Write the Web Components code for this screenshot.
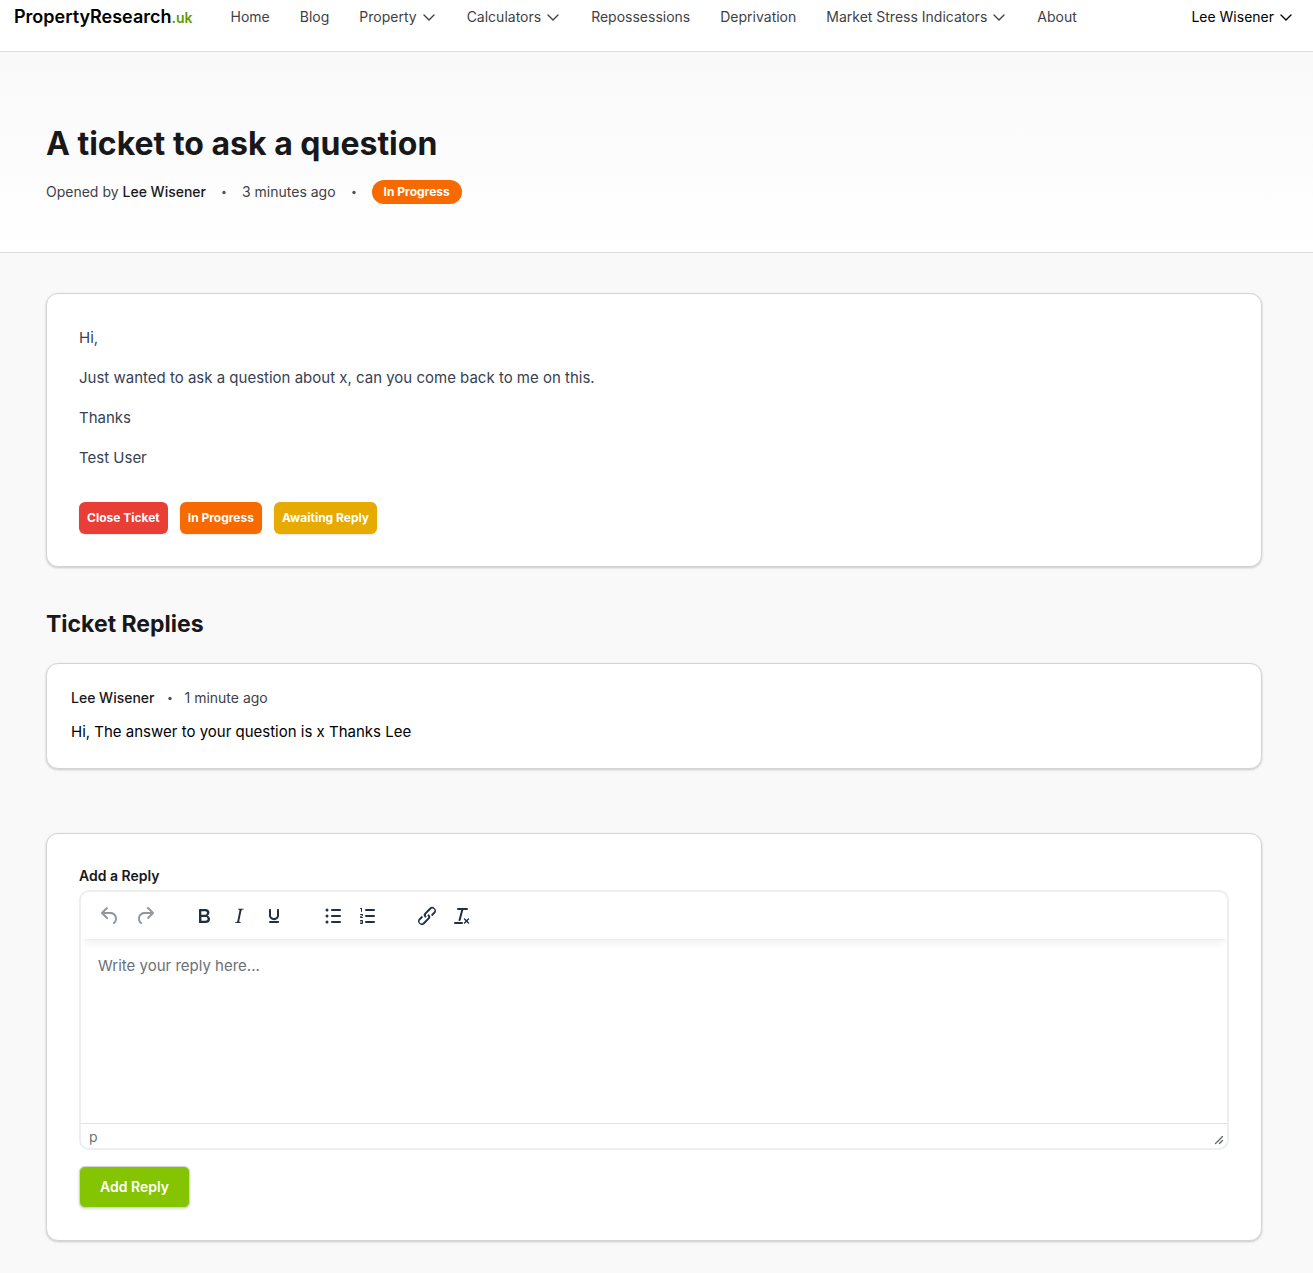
<!DOCTYPE html>
<html lang="en">
<head>
<meta charset="utf-8">
<meta name="viewport" content="width=device-width, initial-scale=1">
<title>A ticket to ask a question</title>
<style>
  body {
    margin: 0;
    background: #f9f9f9;
    color: #000;
    font-family: Inter, "Liberation Sans", sans-serif;
    font-size: 15px;
    line-height: 24px;
    --ink: #18181b;
    --muted: #3f3f46;
    --line: #d4d4d8;
  }
  main {
    padding: 40px 0 32px;
  }
  h2 {
    margin: 40px 0 22px;
    color: var(--ink);
    font-size: 23px;
    line-height: 34px;
    font-weight: 700;
  }
  b {
    color: var(--ink);
    font-weight: 500;
  }
  form {
    display: grid;
    gap: 16px;
    justify-items: start;
  }
  rich-editor {
    width: 100%;
  }
  .message p {
    margin: 0 0 16px;
    color: #374151;
  }
  .message p:last-of-type {
    margin-bottom: 0;
  }
  .actions {
    display: flex;
    flex-wrap: wrap;
    gap: 12px;
    margin-top: 32px;
  }
  .reply p {
    margin: 12px 0 0;
  }
  .add-reply {
    display: block;
    margin-top: 64px;
  }
</style>
</head>
<body>

<site-header user="Lee Wisener">
  <nav-item href="#home">Home</nav-item>
  <nav-item href="#blog">Blog</nav-item>
  <nav-item menu>Property</nav-item>
  <nav-item menu>Calculators</nav-item>
  <nav-item href="#repossessions">Repossessions</nav-item>
  <nav-item href="#deprivation">Deprivation</nav-item>
  <nav-item menu>Market Stress Indicators</nav-item>
  <nav-item href="#about">About</nav-item>
</site-header>

<ticket-hero>
  <span slot="title">A ticket to ask a question</span>
  <meta-line wide>
    <span>Opened by <b>Lee Wisener</b></span>
    <meta-dot></meta-dot>
    <span>3 minutes ago</span>
    <meta-dot></meta-dot>
    <status-badge>In Progress</status-badge>
  </meta-line>
</ticket-hero>

<main>
  <page-container padded>
    <ticket-card class="message">
      <p>Hi,</p>
      <p>Just wanted to ask a question about x, can you come back to me on this.</p>
      <p>Thanks</p>
      <p>Test User</p>
      <div class="actions">
        <action-button tone="red">Close Ticket</action-button>
        <action-button tone="orange">In Progress</action-button>
        <action-button tone="yellow">Awaiting Reply</action-button>
      </div>
    </ticket-card>

    <h2>Ticket Replies</h2>

    <ticket-card compact class="reply">
      <meta-line>
        <b>Lee Wisener</b>
        <meta-dot></meta-dot>
        <span>1 minute ago</span>
      </meta-line>
      <p>Hi, The answer to your question is x Thanks Lee</p>
    </ticket-card>

    <ticket-card class="add-reply">
      <form onsubmit="return false">
        <rich-editor label="Add a Reply" placeholder="Write your reply here..."></rich-editor>
        <action-button tone="lime" large>Add Reply</action-button>
      </form>
    </ticket-card>
  </page-container>
</main>

<script>
const CHEVRON = `
  <svg width="16" height="16" viewBox="0 0 16 16" fill="none" stroke="currentColor"
       stroke-width="1.4" stroke-linecap="round" stroke-linejoin="round" aria-hidden="true">
    <path d="M3 6l5 5 5-5"/>
  </svg>`;

// Centres its content; shared by the header, the hero and the main column
class PageContainer extends HTMLElement {
  constructor() {
    super();
    this.attachShadow({ mode: 'open' });
    this.shadowRoot.innerHTML = `
      <style>
        :host { display: block; padding-right: 5px; }
        div { max-width: 1280px; margin: 0 auto; box-sizing: border-box; }
        :host([padded]) div { padding: 0 32px; }
      </style>
      <div><slot></slot></div>
    `;
  }
}

class NavItem extends HTMLElement {
  constructor() {
    super();
    this.attachShadow({ mode: 'open' });
  }

  connectedCallback() {
    const menu = this.hasAttribute('menu');
    const tag = menu ? 'button' : 'a';
    this.shadowRoot.innerHTML = `
      <style>
        :host { display: block; color: var(--muted); font-size: 14px; line-height: 20px; }
        a, button {
          display: flex;
          align-items: center;
          gap: 4px;
          padding: 0;
          border: 0;
          background: none;
          color: inherit;
          font: inherit;
          white-space: nowrap;
          text-decoration: none;
          cursor: pointer;
        }
      </style>
      <${tag} ${menu ? 'type="button" aria-haspopup="true"' : `href="${this.getAttribute('href')}"`}>
        <slot></slot>${menu ? CHEVRON : ''}
      </${tag}>
    `;
  }
}

class SiteHeader extends HTMLElement {
  constructor() {
    super();
    this.attachShadow({ mode: 'open' });
  }

  connectedCallback() {
    this.shadowRoot.innerHTML = `
      <style>
        :host { display: block; background: #fff; border-bottom: 1px solid #dedee0; }
        .bar { display: flex; align-items: center; padding: 5px 0 22px; }
        .logo {
          display: flex;
          align-items: baseline;
          color: #000;
          font-size: 18px;
          line-height: 24px;
          font-weight: 600;
          text-decoration: none;
        }
        .logo span { color: #5f9c00; font-size: 14px; line-height: 16px; }
        nav { display: flex; gap: 30px; margin-left: 38px; }
        .user { margin-left: auto; color: #000; }
      </style>
      <header>
        <page-container>
          <div class="bar">
            <a class="logo" href="#home">PropertyResearch<span>.uk</span></a>
            <nav><slot></slot></nav>
            <nav-item class="user" menu>${this.getAttribute('user')}</nav-item>
          </div>
        </page-container>
      </header>
    `;
  }
}

class TicketHero extends HTMLElement {
  constructor() {
    super();
    this.attachShadow({ mode: 'open' });
    this.shadowRoot.innerHTML = `
      <style>
        :host {
          display: block;
          padding: 72px 0 48px;
          background: linear-gradient(#f9f9f9, #fff);
          border-bottom: 1px solid #dedee0;
        }
        h1 {
          margin: 0 0 16px;
          color: var(--ink);
          font-size: 32px;
          line-height: 40px;
          font-weight: 700;
        }
      </style>
      <page-container padded>
        <h1><slot name="title"></slot></h1>
        <slot></slot>
      </page-container>
    `;
  }
}

class MetaLine extends HTMLElement {
  constructor() {
    super();
    this.attachShadow({ mode: 'open' });
    this.shadowRoot.innerHTML = `
      <style>
        :host {
          display: flex;
          flex-wrap: wrap;
          align-items: center;
          gap: 12px;
          color: var(--muted);
          font-size: 14px;
          line-height: 20px;
        }
        :host([wide]) { gap: 15px; }
      </style>
      <slot></slot>
    `;
  }
}

class MetaDot extends HTMLElement {
  constructor() {
    super();
    this.attachShadow({ mode: 'open' });
    this.shadowRoot.innerHTML = `
      <style>
        :host { display: block; width: 6px; height: 6px; color: #52525b; }
        svg { display: block; }
      </style>
      <svg width="6" height="6" viewBox="0 0 6 6" aria-hidden="true">
        <circle cx="3" cy="3.5" r="1.7" fill="currentColor"/>
      </svg>
    `;
  }
}

class StatusBadge extends HTMLElement {
  constructor() {
    super();
    this.attachShadow({ mode: 'open' });
    this.shadowRoot.innerHTML = `
      <style>
        :host {
          display: block;
          padding: 4px 12px;
          border-radius: 12px;
          background: #f66a00;
          color: #fff;
          font-size: 12px;
          line-height: 16px;
          font-weight: 700;
        }
      </style>
      <slot></slot>
    `;
  }
}

class TicketCard extends HTMLElement {
  constructor() {
    super();
    this.attachShadow({ mode: 'open' });
    this.shadowRoot.innerHTML = `
      <style>
        :host {
          display: block;
          padding: 32px;
          border: 1px solid var(--line);
          border-radius: 12px;
          background: #fff;
          box-shadow: 0 1px 3px rgba(0, 0, 0, 0.1), 0 1px 2px rgba(0, 0, 0, 0.1);
        }
        :host([compact]) { padding: 24px; }
      </style>
      <slot></slot>
    `;
  }
}

class ActionButton extends HTMLElement {
  constructor() {
    super();
    this.attachShadow({ mode: 'open' });
    this.shadowRoot.innerHTML = `
      <style>
        :host { display: block; }
        :host([tone="red"]) { --tone: #e83e36; }
        :host([tone="orange"]) { --tone: #f66a00; }
        :host([tone="yellow"]) { --tone: #e6aa00; }
        :host([tone="lime"]) { --tone: #84c400; }
        button {
          display: block;
          padding: 8px;
          border: 0;
          border-radius: 6px;
          background: var(--tone);
          color: #fff;
          font: 700 12px/16px Inter, "Liberation Sans", sans-serif;
          box-shadow: 0 1px 2px rgba(0, 0, 0, 0.1);
          cursor: pointer;
        }
        :host([large]) button {
          padding: 10px 20px;
          border: 1px solid var(--line);
          font-size: 14px;
          line-height: 20px;
          font-weight: 600;
          box-shadow: 0 1px 3px rgba(0, 0, 0, 0.15);
        }
      </style>
      <button type="button"><slot></slot></button>
    `;
  }
}

// Toolbar groups, in the order they are shown
const TOOLS = [
  [
    { name: 'Undo', off: true, d: 'M6.4 8H12c3.7 0 6.2 2 6.8 5.1.6 2.7-.4 5.6-2.3 6.8a1 1 0 0 1-1-1.8c1.1-.6 1.8-2.7 1.4-4.6-.5-2.1-2.1-3.5-4.9-3.5H6.4l3.3 3.3a1 1 0 1 1-1.4 1.4l-5-5a1 1 0 0 1 0-1.4l5-5a1 1 0 0 1 1.4 1.4L6.4 8Z' },
    { name: 'Redo', off: true, d: 'M17.6 10H12c-2.8 0-4.4 1.4-4.9 3.5-.4 2 .3 4 1.4 4.6a1 1 0 1 1-1 1.8c-2-1.2-2.9-4.1-2.3-6.8.6-3 3-5.1 6.8-5.1h5.6l-3.3-3.3a1 1 0 1 1 1.4-1.4l5 5a1 1 0 0 1 0 1.4l-5 5a1 1 0 0 1-1.4-1.4l3.3-3.3Z' }
  ],
  [
    { name: 'Bold', d: 'M7.8 19c-.3 0-.5 0-.6-.2l-.2-.5V5.7c0-.2 0-.4.2-.5l.6-.2h5c1.5 0 2.7.3 3.5 1 .7.6 1.1 1.4 1.1 2.5a3 3 0 0 1-.6 1.9c-.4.6-1 1-1.6 1.2.4.1.9.3 1.3.6s.8.7 1 1.2c.4.4.5 1 .5 1.6 0 1.3-.4 2.3-1.3 3-.8.7-2.1 1-3.8 1H7.8Zm5-8.3c.6 0 1.2-.1 1.6-.5.4-.3.6-.7.6-1.3 0-1.1-.8-1.7-2.3-1.7H9.3v3.5h3.4Zm.5 6c.7 0 1.3-.1 1.7-.4.4-.4.6-.9.6-1.5s-.2-1-.7-1.4c-.4-.3-1-.4-2-.4H9.4v3.8h4Z' },
    { name: 'Italic', d: 'm16.7 4.7-.1.9h-.3c-.6 0-1 0-1.4.3-.3.3-.4.6-.5 1.1l-2.1 9.8v.6c0 .5.4.8 1.4.8h.2l-.2.8H8l.2-.8h.2c1.1 0 1.8-.5 2-1.5l2-9.8.1-.5c0-.6-.4-.8-1.4-.8h-.3l.2-.9h5.8Z' },
    { name: 'Underline', d: 'M16 5c.6 0 1 .4 1 1v5.5a4 4 0 0 1-.4 1.8l-1 1.4a5.3 5.3 0 0 1-5.5 1 5 5 0 0 1-1.6-1c-.5-.4-.8-.9-1.1-1.4a4 4 0 0 1-.4-1.8V6c0-.6.4-1 1-1s1 .4 1 1v5.5c0 .3 0 .6.2 1l.6.7a3.3 3.3 0 0 0 2.2.8 3.4 3.4 0 0 0 2.2-.8c.3-.2.4-.5.6-.8l.2-.9V6c0-.6.4-1 1-1ZM8 17h8c.6 0 1 .4 1 1s-.4 1-1 1H8a1 1 0 0 1 0-2Z' }
  ],
  [
    { name: 'Bullet list', d: 'M11 5h8a1 1 0 0 1 0 2h-8a1 1 0 0 1 0-2Zm0 6h8a1 1 0 0 1 0 2h-8a1 1 0 0 1 0-2Zm0 6h8a1 1 0 0 1 0 2h-8a1 1 0 0 1 0-2ZM4.5 6a1.5 1.5 0 1 1 3 0 1.5 1.5 0 0 1-3 0Zm0 6a1.5 1.5 0 1 1 3 0 1.5 1.5 0 0 1-3 0Zm0 6a1.5 1.5 0 1 1 3 0 1.5 1.5 0 0 1-3 0Z' },
    { name: 'Numbered list', d: 'M10 17h8a1 1 0 0 1 0 2h-8a1 1 0 0 1 0-2Zm0-6h8a1 1 0 0 1 0 2h-8a1 1 0 0 1 0-2Zm0-6h8a1 1 0 0 1 0 2h-8a1 1 0 1 1 0-2ZM6 4v3.5c0 .3-.2.5-.5.5a.5.5 0 0 1-.5-.5V5h-.5a.5.5 0 0 1 0-1H6Zm-1 8.8.2.2h1.3c.3 0 .5.2.5.5s-.2.5-.5.5H4.9a1 1 0 0 1-.9-1V13c0-.4.3-.8.6-1l1.2-.4.2-.3a.2.2 0 0 0-.2-.2H4.5a.5.5 0 0 1-.5-.5c0-.3.2-.5.5-.5h1.6c.5 0 .9.4.9 1v.1c0 .4-.3.8-.6 1l-1.2.4-.2.3ZM7 17v2c0 .6-.4 1-1 1H4.5a.5.5 0 0 1 0-1h1.2c.2 0 .3-.1.3-.3 0-.2-.1-.3-.3-.3H4.4a.4.4 0 1 1 0-.8h1.3c.2 0 .3-.1.3-.3 0-.2-.1-.3-.3-.3H4.5a.5.5 0 1 1 0-1H6c.6 0 1 .4 1 1Z' }
  ],
  [
    { name: 'Link', d: 'M6.2 12.3a1 1 0 0 1 1.4 1.4l-2 2a2 2 0 1 0 2.6 2.8l4.8-4.8a1 1 0 0 0 0-1.4 1 1 0 1 1 1.4-1.3 2.9 2.9 0 0 1 0 4L9.6 20a3.9 3.9 0 0 1-5.5-5.5l2-2Zm11.6-.6a1 1 0 0 1-1.4-1.4l2-2a2 2 0 1 0-2.6-2.8L11 10.3a1 1 0 0 0 0 1.4A1 1 0 1 1 9.6 13a2.9 2.9 0 0 1 0-4L14.4 4a3.9 3.9 0 0 1 5.5 5.5l-2 2Z' },
    { name: 'Clear formatting', d: 'M13.2 6a1 1 0 0 1 0 .2l-2.6 10a1 1 0 0 1-1 .8h-.2a.8.8 0 0 1-.8-1l2.6-10H8a1 1 0 1 1 0-2h9a1 1 0 0 1 0 2h-3.8ZM5 18h7a1 1 0 0 1 0 2H5a1 1 0 0 1 0-2Zm13 1.5L16.5 18 15 19.5a.7.7 0 0 1-1-1l1.5-1.5-1.5-1.5a.7.7 0 0 1 1-1l1.5 1.5 1.5-1.5a.7.7 0 0 1 1 1L17.5 17l1.5 1.5a.7.7 0 0 1-1 1Z' }
  ]
];

class RichEditor extends HTMLElement {
  constructor() {
    super();
    this.attachShadow({ mode: 'open' });
  }

  connectedCallback() {
    const groups = TOOLS.map(group => `
      <div class="group">${group.map(tool => `
        <button type="button" aria-label="${tool.name}" ${tool.off ? 'disabled' : ''}>
          <svg width="24" height="24" viewBox="0 0 24 24" aria-hidden="true">
            <path fill="currentColor" fill-rule="evenodd" d="${tool.d}"/>
          </svg>
        </button>`).join('')}
      </div>`).join('');

    this.shadowRoot.innerHTML = `
      <style>
        :host { display: block; }
        label {
          display: block;
          margin-bottom: 4px;
          color: var(--ink);
          font-size: 14px;
          line-height: 20px;
          font-weight: 600;
        }
        .editor {
          display: flex;
          flex-direction: column;
          border: 2px solid #eee;
          border-radius: 10px;
          background: #fff;
          overflow: hidden;
        }
        .toolbar {
          display: flex;
          flex-wrap: wrap;
          gap: 25px;
          padding: 10px 12px 9px;
          box-shadow: 0 2px 2px -2px rgba(34, 47, 62, 0.1), 0 8px 8px -4px rgba(34, 47, 62, 0.07);
        }
        .group { display: flex; gap: 1px; }
        .toolbar button {
          display: grid;
          place-items: center;
          width: 34px;
          height: 28px;
          padding: 0;
          border: 0;
          border-radius: 3px;
          background: none;
          color: #222f3e;
        }
        .toolbar button:disabled { color: rgba(34, 47, 62, 0.5); }
        svg { display: block; }
        textarea {
          height: 184px;
          box-sizing: border-box;
          padding: 15px 17px;
          border: 0;
          outline: 0;
          resize: none;
          background: none;
          color: #222f3e;
          font: inherit;
        }
        textarea::placeholder { color: #6b7078; opacity: 1; }
        .status {
          display: flex;
          align-items: flex-end;
          justify-content: space-between;
          padding: 3px 3px 1px 8px;
          border-top: 1px solid #e3e3e3;
          color: rgba(34, 47, 62, 0.7);
          font-size: 14px;
          line-height: 20px;
        }
        .status svg { margin-bottom: 2px; }
      </style>
      <label for="body">${this.getAttribute('label')}</label>
      <div class="editor">
        <div class="toolbar" role="toolbar">${groups}</div>
        <textarea id="body" placeholder="${this.getAttribute('placeholder')}"></textarea>
        <div class="status">
          <span>p</span>
          <svg width="10" height="10" viewBox="0 0 10 10" aria-hidden="true">
            <path fill="currentColor" d="M8.1 1.1A.5.5 0 1 1 9 2L2 9A.5.5 0 1 1 1 8l7-7ZM8.1 5.1A.5.5 0 1 1 9 6L6 9A.5.5 0 1 1 5 8l3-3Z"/>
          </svg>
        </div>
      </div>
    `;
  }
}

customElements.define('page-container', PageContainer);
customElements.define('nav-item', NavItem);
customElements.define('site-header', SiteHeader);
customElements.define('ticket-hero', TicketHero);
customElements.define('meta-line', MetaLine);
customElements.define('meta-dot', MetaDot);
customElements.define('status-badge', StatusBadge);
customElements.define('ticket-card', TicketCard);
customElements.define('action-button', ActionButton);
customElements.define('rich-editor', RichEditor);
</script>
</body>
</html>
